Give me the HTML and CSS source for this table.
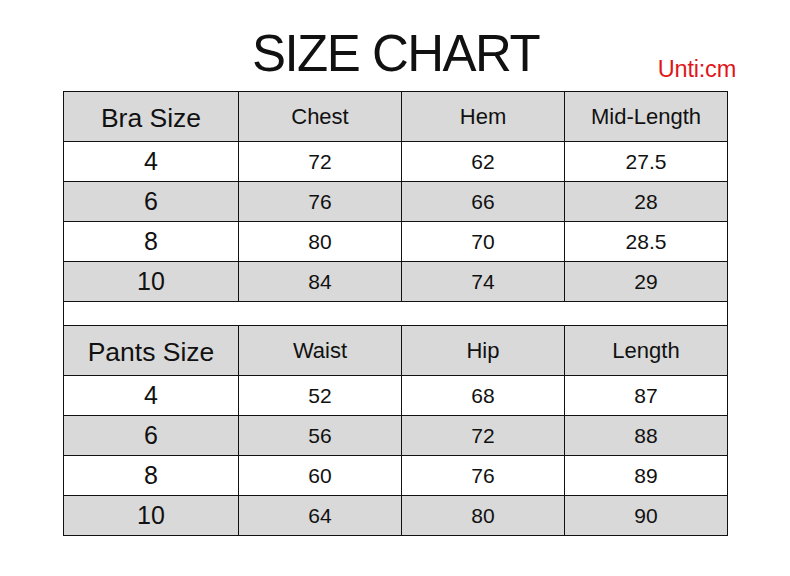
FILE: index.html
```html
<!DOCTYPE html>
<html lang="en">
<head>
<meta charset="utf-8">
<title>Size Chart</title>
<link rel="stylesheet" href="styles.css">
</head>
<body>
<div class="page">
  <header class="head">
    <div class="side"></div>
    <h1 class="title">SIZE CHART</h1>
    <div class="side side-right"><span class="unit">Unti:cm</span></div>
  </header>
  <div class="chart">
    <div class="cell hd first">Bra Size</div>
    <div class="cell hd">Chest</div>
    <div class="cell hd">Hem</div>
    <div class="cell hd">Mid-Length</div>

    <div class="cell first">4</div><div class="cell">72</div><div class="cell">62</div><div class="cell">27.5</div>
    <div class="cell first alt">6</div><div class="cell alt">76</div><div class="cell alt">66</div><div class="cell alt">28</div>
    <div class="cell first">8</div><div class="cell">80</div><div class="cell">70</div><div class="cell">28.5</div>
    <div class="cell first alt">10</div><div class="cell alt">84</div><div class="cell alt">74</div><div class="cell alt">29</div>

    <div class="cell spacer"></div>

    <div class="cell hd first">Pants Size</div>
    <div class="cell hd">Waist</div>
    <div class="cell hd">Hip</div>
    <div class="cell hd">Length</div>

    <div class="cell first">4</div><div class="cell">52</div><div class="cell">68</div><div class="cell">87</div>
    <div class="cell first alt">6</div><div class="cell alt">56</div><div class="cell alt">72</div><div class="cell alt">88</div>
    <div class="cell first">8</div><div class="cell">60</div><div class="cell">76</div><div class="cell">89</div>
    <div class="cell first alt">10</div><div class="cell alt">64</div><div class="cell alt">80</div><div class="cell alt">90</div>
  </div>
</div>
</body>
</html>
```

FILE: styles.css
```css
html, body {
  margin: 0;
  padding: 0;
  background: #ffffff;
}

body {
  font-family: "Liberation Sans", Arial, sans-serif;
  color: #111111;
}

.page {
  padding: 28px 0 0 63px;
}

.head {
  display: flex;
  width: 665px;
  height: 52px;
  margin-bottom: 11px;
}

.side {
  flex: 1 1 0;
  display: flex;
  justify-content: flex-end;
}

.side-right {
  align-items: flex-end;
}

.title {
  margin: 0;
  font-size: 51px;
  line-height: 52px;
  font-weight: normal;
  letter-spacing: -1.5px;
  color: #111111;
  white-space: nowrap;
}

.unit {
  color: #e0161b;
  font-size: 23.5px;
  line-height: 21px;
  letter-spacing: -0.2px;
  margin-right: -8px;
  white-space: nowrap;
}

.chart {
  display: grid;
  grid-template-columns: 175px 163px 163px 163px;
  width: 664px;
  border-left: 1px solid #111;
  border-top: 1px solid #111;
}

.cell {
  box-sizing: border-box;
  height: 40px;
  border-right: 1px solid #111;
  border-bottom: 1px solid #111;
  display: flex;
  align-items: center;
  justify-content: center;
  font-size: 21px;
  background: #ffffff;
}

.cell.first {
  font-size: 25px;
}

.cell.alt {
  background: #d9d9d9;
}

.cell.hd {
  height: 50px;
  background: #d9d9d9;
  font-size: 22px;
}

.cell.hd.first {
  font-size: 26.5px;
  padding-top: 3px;
}

.cell.spacer {
  grid-column: 1 / -1;
  height: 24px;
}
```
